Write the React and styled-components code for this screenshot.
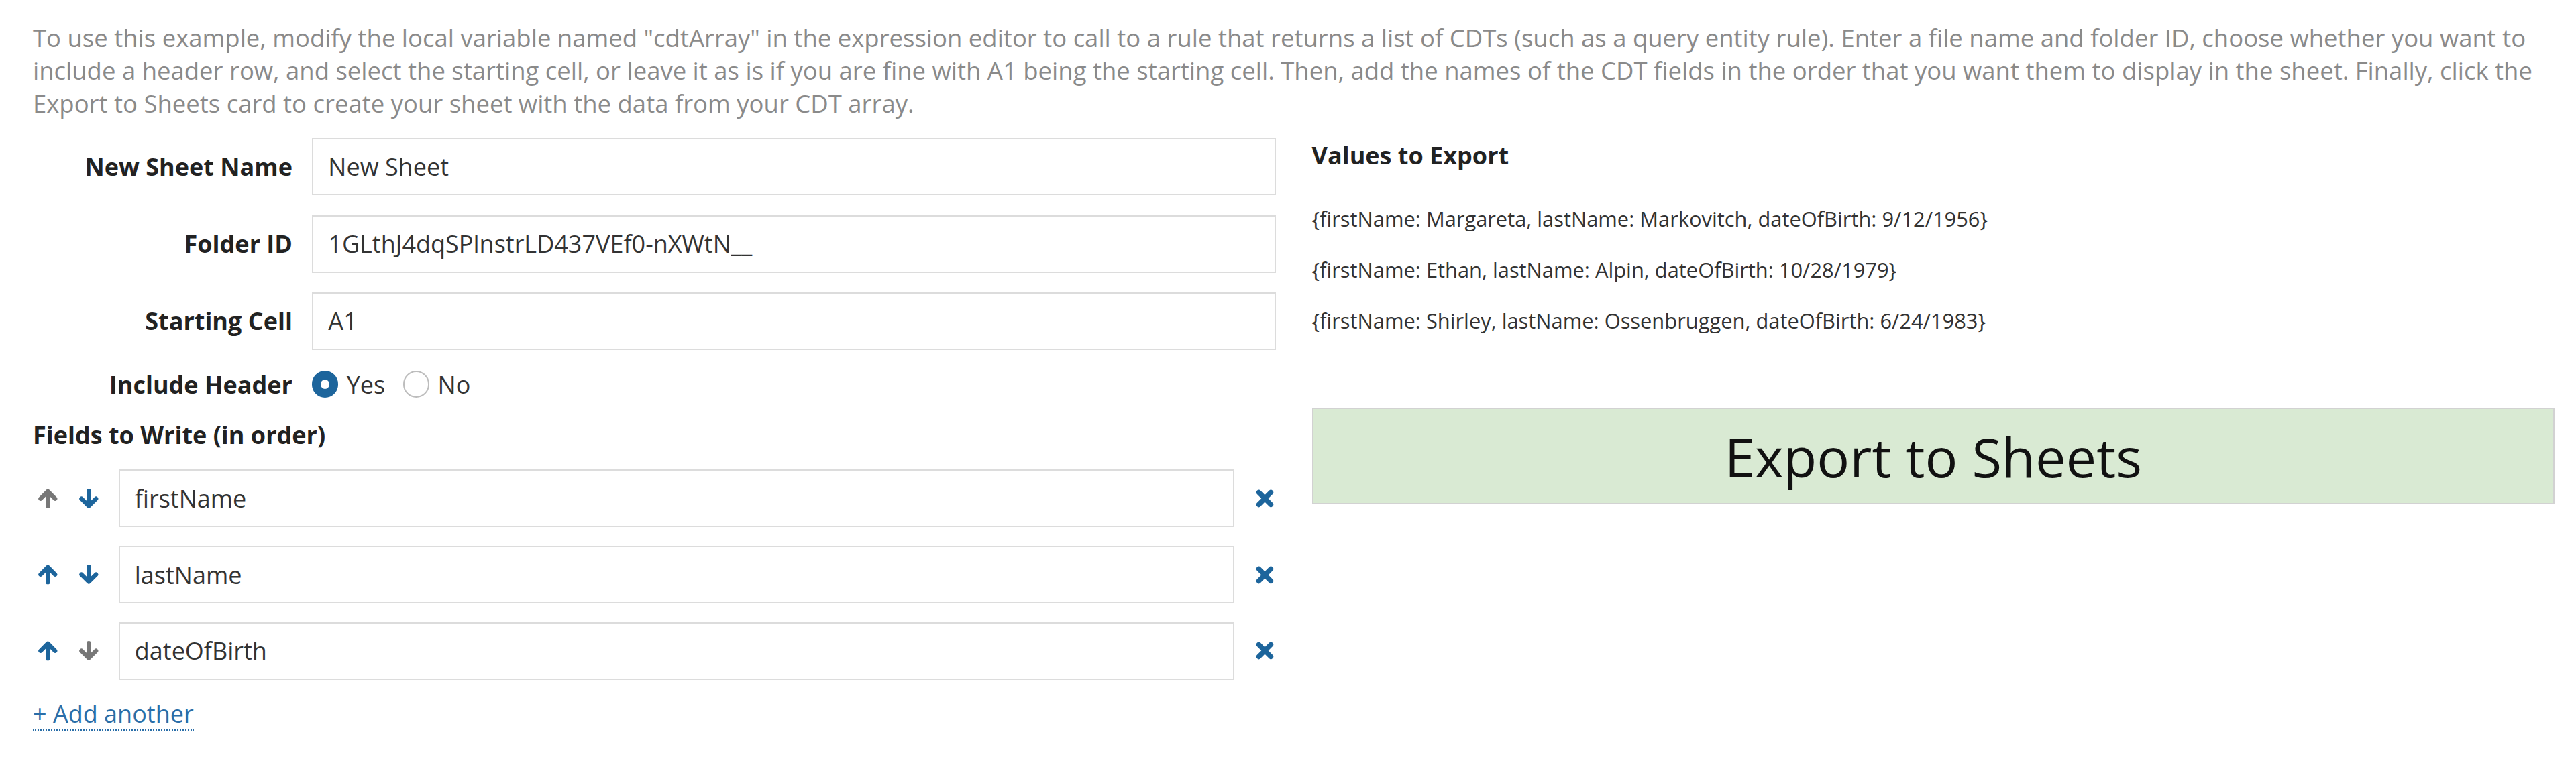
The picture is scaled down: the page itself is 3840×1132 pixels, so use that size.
import React from 'react';
import styled, { createGlobalStyle } from 'styled-components';

const GlobalStyle = createGlobalStyle`
  html, body {
    margin: 0;
    padding: 0;
    background: #fff;
  }

  body {
    font-family: "Open Sans", "Liberation Sans", sans-serif;
    color: #222;
  }
`;

const Page = styled.div`
  zoom: 2.449;
  width: 1568px;
  box-sizing: border-box;
  padding: 13px 13px 20px 20px;
`;

const Intro = styled.p`
  margin: 0 0 11px;
  font-size: 14.9px;
  line-height: 20px;
  color: #8a8a8a;
  white-space: nowrap;
`;

const Columns = styled.div`
  display: grid;
  grid-template-columns: 1fr 1fr;
  column-gap: 22px;
  align-items: start;
`;

const Column = styled.div`
  display: flex;
  flex-direction: column;
`;

const LabeledRow = styled.div`
  display: grid;
  grid-template-columns: 158px 1fr;
  column-gap: 12px;
  align-items: center;
  margin-bottom: ${(props) => props.gap ?? 12}px;
`;

const Label = styled.label`
  text-align: right;
  font-size: 14.7px;
  font-weight: 700;
  line-height: 20px;
  color: #222;
`;

const TextInput = styled.input`
  box-sizing: border-box;
  width: 100%;
  height: 35px;
  margin: 0;
  padding: 0 9px;
  border: 1px solid #dcdcdc;
  border-radius: 0;
  background: #fff;
  font-family: inherit;
  font-size: 14.7px;
  color: #333;
  outline: none;
`;

const RadioGroup = styled.div`
  display: flex;
  align-items: center;
  height: 20px;
`;

const RadioOption = styled.span`
  display: flex;
  align-items: center;
  gap: 5px;
  margin-right: 11px;
  font-size: 14.7px;
  line-height: 20px;
  color: #333;
`;

const RadioDot = styled.span`
  box-sizing: border-box;
  width: 16px;
  height: 16px;
  border-radius: 50%;
  border: ${(props) => (props.checked ? '5.5px solid #1d659c' : '1px solid #bdbdbd')};
  background: #fff;
`;

const SectionTitle = styled.div`
  font-size: 14.7px;
  font-weight: 700;
  line-height: 20px;
  color: #222;
  margin: ${(props) => props.margin || '0'};
`;

const FieldRow = styled.div`
  display: flex;
  align-items: center;
  height: 35px;
  margin-bottom: 11.5px;
  padding-left: 2.5px;
`;

const ArrowButton = styled.span`
  display: flex;
  align-items: center;
  justify-content: center;
  width: 13px;
  margin-right: 12px;
  color: ${(props) => (props.disabled ? '#777' : '#1d659c')};

  svg {
    width: 12.5px;
    height: 12px;
  }
`;

const FieldInput = styled(TextInput)`
  flex: 1;
  width: auto;
  margin-left: -0.3px;
`;

const RemoveButton = styled.span`
  display: flex;
  align-items: center;
  justify-content: center;
  width: 13px;
  margin-left: 12px;
  color: #1d659c;

  svg {
    width: 11px;
    height: 11px;
  }
`;

const AddLink = styled.a`
  align-self: flex-start;
  font-size: 14.7px;
  line-height: 19px;
  color: #2a6ea8;
  text-decoration: none;
  border-bottom: 1px dotted #2a6ea8;
`;

const ValueLine = styled.div`
  font-size: 12.6px;
  line-height: 17px;
  color: #333;
  white-space: nowrap;
  margin-top: ${(props) => props.top}px;
`;

const ExportCard = styled.div`
  box-sizing: border-box;
  height: 59px;
  margin-top: 44.3px;
  display: flex;
  align-items: center;
  justify-content: center;
  background: #d9ead3;
  border: 1px solid #d2d2d2;
  font-size: 33.2px;
  color: #111;
`;

const Arrow = ({ down }) => (
  <svg viewBox="0 0 24 23" aria-hidden="true">
    <g
      transform={down ? 'rotate(180 12 11.5)' : undefined}
      fill="none"
      stroke="currentColor"
      strokeWidth="5"
      strokeLinecap="round"
      strokeLinejoin="round"
    >
      <path d="M3.5 11.5 L12 3 L20.5 11.5" />
      <path d="M12 4 L12 20.5" />
    </g>
  </svg>
);

const Cross = () => (
  <svg viewBox="0 0 12 12" aria-hidden="true">
    <path
      d="M2 2 L10 10 M10 2 L2 10"
      fill="none"
      stroke="currentColor"
      strokeWidth="3.3"
      strokeLinecap="round"
    />
  </svg>
);

const fields = [
  { name: 'firstName', up: false, down: true },
  { name: 'lastName', up: true, down: true },
  { name: 'dateOfBirth', up: true, down: false },
];

const values = [
  '{firstName: Margareta, lastName: Markovitch, dateOfBirth: 9/12/1956}',
  '{firstName: Ethan, lastName: Alpin, dateOfBirth: 10/28/1979}',
  '{firstName: Shirley, lastName: Ossenbruggen, dateOfBirth: 6/24/1983}',
];

export default function App() {
  return (
    <>
      <GlobalStyle />
      <Page>
        <Intro>
          To use this example, modify the local variable named "cdtArray" in the expression editor
          to call to a rule that returns a list of CDTs (such as a query entity rule). Enter a file
          name and folder ID, choose whether you want to
          <br />
          include a header row, and select the starting cell, or leave it as is if you are fine
          with A1 being the starting cell. Then, add the names of the CDT fields in the order that
          you want them to display in the sheet. Finally, click the
          <br />
          Export to Sheets card to create your sheet with the data from your CDT array.
        </Intro>
        <Columns>
          <Column>
            <LabeledRow>
              <Label>New Sheet Name</Label>
              <TextInput defaultValue="New Sheet" />
            </LabeledRow>
            <LabeledRow>
              <Label>Folder ID</Label>
              <TextInput defaultValue="1GLthJ4dqSPlnstrLD437VEf0-nXWtN__" />
            </LabeledRow>
            <LabeledRow gap={11}>
              <Label>Starting Cell</Label>
              <TextInput defaultValue="A1" />
            </LabeledRow>
            <LabeledRow gap={0}>
              <Label>Include Header</Label>
              <RadioGroup>
                <RadioOption>
                  <RadioDot checked />
                  Yes
                </RadioOption>
                <RadioOption>
                  <RadioDot />
                  No
                </RadioOption>
              </RadioGroup>
            </LabeledRow>
            <SectionTitle margin="11px 0 11px">Fields to Write (in order)</SectionTitle>
            {fields.map((f) => (
              <FieldRow key={f.name}>
                <ArrowButton disabled={!f.up}>
                  <Arrow />
                </ArrowButton>
                <ArrowButton disabled={!f.down}>
                  <Arrow down />
                </ArrowButton>
                <FieldInput defaultValue={f.name} />
                <RemoveButton>
                  <Cross />
                </RemoveButton>
              </FieldRow>
            ))}
            <AddLink href="#">+ Add another</AddLink>
          </Column>
          <Column>
            <SectionTitle margin="0.6px 0 0">Values to Export</SectionTitle>
            {values.map((v, i) => (
              <ValueLine key={v} top={i === 0 ? 20.3 : 14}>
                {v}
              </ValueLine>
            ))}
            <ExportCard>Export to Sheets</ExportCard>
          </Column>
        </Columns>
      </Page>
    </>
  );
}
